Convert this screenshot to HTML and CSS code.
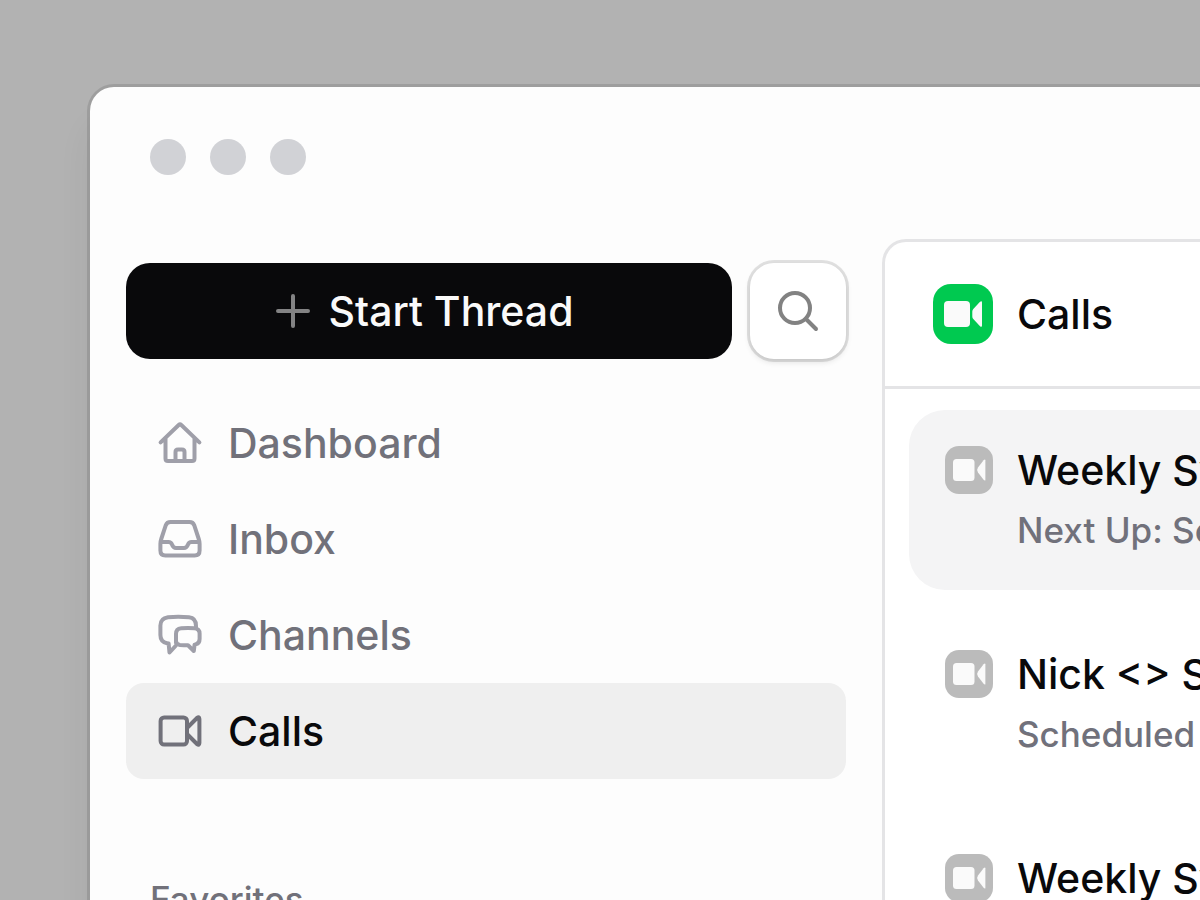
FILE: index.html
```html
<!DOCTYPE html>
<html lang="en">
<head>
<meta charset="utf-8">
<title>Calls</title>
<link rel="stylesheet" href="styles.css">
</head>
<body>
<svg class="defs" aria-hidden="true">
  <symbol id="call-badge" viewBox="0 0 48 48">
    <rect x="8" y="13" width="21.5" height="22" rx="3.5"/>
    <path d="M33 21.500 38.600 14.200Q40.400 12.400 40.400 14.600V33.400Q40.400 35.600 38.600 33.800L33 26.500Q31.200 24 33 21.500Z"/>
  </symbol>
</svg>
<div class="window">
  <header class="titlebar">
    <span class="dot"></span><span class="dot"></span><span class="dot"></span>
  </header>
  <div class="body">
    <aside class="sidebar">
      <div class="actions">
        <button class="start" type="button">
          <svg class="plus" viewBox="0 0 36 36" aria-hidden="true"><path d="M18 3V33M3 18H33"/></svg>
          <span>Start Thread</span>
        </button>
        <button class="search" type="button" aria-label="Search">
          <svg class="icon" viewBox="0 0 48 48" aria-hidden="true"><circle cx="21" cy="21" r="15"/><path d="M32 32 42 42"/></svg>
        </button>
      </div>
      <nav class="nav">
        <a class="item" href="#dashboard">
          <svg class="icon" viewBox="0 0 48 48" aria-hidden="true"><path d="M4.600 23.400 22.700 6Q24 4.800 25.300 6L43.400 23.400M9.500 19.500V39.500Q9.500 42 12 42H36Q38.500 42 38.500 39.500V19.500M19.500 42V33Q19.500 30.500 22 30.500H26Q28.500 30.500 28.500 33V42"/></svg>
          <span>Dashboard</span>
        </a>
        <a class="item" href="#inbox">
          <svg class="icon" viewBox="0 0 48 48" aria-hidden="true"><path d="M14.500 7H33.500Q37 7 38.200 10.200L42.600 23.500Q43.600 26.500 43.600 29V35.500Q43.600 40.500 38.600 40.500H9.400Q4.400 40.500 4.400 35.500V29Q4.400 26.500 5.400 23.500L9.800 10.200Q11 7 14.500 7ZM4.800 27H12.500Q15 27 16 29.500Q17.300 33 20 33H28Q30.700 33 32 29.500Q33 27 35.500 27H43.200"/></svg>
          <span>Inbox</span>
        </a>
        <a class="item" href="#channels">
          <svg class="icon" viewBox="0 0 48 48" aria-hidden="true"><path d="M40 16.500V15C40 9 37 6.700 33 6.300Q22 5.200 12 6.300C7 7 4.400 9.500 4.400 14.500V24C4.400 29 6.500 31.300 11 32.200L12.600 32.500 13.500 41.500 19.500 35M20 32V23Q20 17.600 25.200 17.200Q32 16.600 38.500 17.200Q43.600 17.800 43.600 22.500V28Q43.600 32.600 39.500 33.400L38.600 33.600 37.800 40 32 34.300Q28 34.300 24 34Q20 33.500 20 30"/></svg>
          <span>Channels</span>
        </a>
        <a class="item active" href="#calls" aria-current="page">
          <svg class="icon" viewBox="0 0 48 48" aria-hidden="true"><rect x="4.600" y="10.500" width="26.400" height="27" rx="3.500"/><path d="M31.500 20.500 41 11Q43.400 9.300 43.400 12V36Q43.400 38.700 41 37L31.500 27.500"/></svg>
          <span>Calls</span>
        </a>
      </nav>
      <h2 class="group">Favorites</h2>
    </aside>
    <main class="panel">
      <div class="panel-head">
        <span class="badge big"><svg viewBox="0 0 60 60" aria-hidden="true"><rect x="11" y="17" width="26" height="26" rx="4"/><path d="M40.300 25 46.800 18Q49 16 49 18.600V41.400Q49 44 46.800 42L40.300 35Q39.300 34 39.300 32.500V27.500Q39.300 26 40.300 25Z"/></svg></span>
        <h1 class="title">Calls</h1>
      </div>
      <div class="list">
        <a class="call selected" href="#call-1">
          <span class="badge"><svg aria-hidden="true"><use href="#call-badge"/></svg></span>
          <span class="info"><span class="name">Weekly Sync</span><span class="note">Next Up: Sep</span></span>
        </a>
        <a class="call" href="#call-2">
          <span class="badge"><svg aria-hidden="true"><use href="#call-badge"/></svg></span>
          <span class="info"><span class="name">Nick &lt;&gt; Sam</span><span class="note">Scheduled</span></span>
        </a>
        <a class="call" href="#call-3">
          <span class="badge"><svg aria-hidden="true"><use href="#call-badge"/></svg></span>
          <span class="info"><span class="name">Weekly Sync</span><span class="note">Scheduled</span></span>
        </a>
      </div>
    </main>
  </div>
</div>
</body>
</html>
```
FILE: styles.css
```css
* { box-sizing: border-box; }
body {
  margin: 0;
  height: 100vh;
  overflow: hidden;
  padding: 87px 0 0 90px;
  background: #b2b2b2;
  font: 500 41px/48px Inter, sans-serif;
  color: #09090b;
}
.defs { display: none; }
button, a { font: inherit; color: inherit; text-decoration: none; }
h1, h2 { margin: 0; font-weight: inherit; }
svg { display: block; }

.window {
  display: flex;
  flex-direction: column;
  min-height: 100%;
  background: #fdfdfd;
  border-top-left-radius: 24px;
  box-shadow: 0 0 0 3px rgba(0, 0, 0, 0.11), 0 36px 36px rgba(0, 0, 0, 0.06);
}
.titlebar {
  display: flex;
  align-items: center;
  gap: 24px;
  height: 140px;
  padding: 0 60px;
}
.dot { width: 36px; height: 36px; border-radius: 50%; background: #d1d2d6; }

.body { display: flex; flex: 1; }
.sidebar { flex: 0 0 792px; padding: 36px; }
.actions { display: flex; gap: 18px; margin-bottom: 36px; }
.start {
  flex: 1;
  display: flex;
  align-items: center;
  justify-content: center;
  gap: 18px;
  height: 96px;
  padding: 0 10px 0 0;
  border: 0;
  border-radius: 24px;
  background: #09090b;
  color: #fafafa;
}
.plus { width: 36px; height: 36px; stroke: #838384; stroke-width: 4; stroke-linecap: round; }
.search {
  display: grid;
  place-items: center;
  width: 96px;
  height: 96px;
  border: 0;
  border-radius: 24px;
  background: #fff;
  color: #828282;
  box-shadow: 0 0 0 3px rgba(0, 0, 0, 0.11), 0 3px 6px rgba(0, 0, 0, 0.12);
}
.icon {
  flex: none;
  width: 48px;
  height: 48px;
  fill: none;
  stroke: currentColor;
  stroke-width: 4;
  stroke-linecap: round;
  stroke-linejoin: round;
}
.nav { display: flex; flex-direction: column; }
.item {
  display: flex;
  align-items: center;
  gap: 24px;
  height: 96px;
  padding: 0 30px;
  border-radius: 18px;
  color: #71717a;
}
.item .icon { color: #9f9fa9; }
.active { background: #efefef; color: #09090b; }
.active .icon { color: #71717a; }
.group {
  margin-top: 96px;
  padding-left: 24px;
  font-size: 35px;
  line-height: 48px;
  color: #71717a;
}

.panel {
  flex: 1;
  min-width: 0;
  margin-top: 12px;
  border: 3px solid #e4e4e6;
  border-width: 3px 0 0 3px;
  border-top-left-radius: 24px;
  background: #fff;
}
.panel-head {
  display: flex;
  align-items: center;
  gap: 24px;
  height: 147px;
  padding: 0 48px;
  border-bottom: 3px solid #e4e4e6;
}
.title { font-size: inherit; }
.badge {
  flex: none;
  width: 48px;
  height: 48px;
  border-radius: 14px;
  background: #bbb;
  fill: #fafafa;
}
.badge svg { width: 100%; height: 100%; }
.big { width: 60px; height: 60px; border-radius: 18px; background: #00c950; }
.list { display: flex; flex-direction: column; gap: 24px; padding: 21px 0 0 24px; }
.call {
  display: flex;
  gap: 24px;
  height: 180px;
  padding: 36px 0 36px 36px;
  border-radius: 36px 0 0 36px;
}
.selected { background: #f4f4f5; }
.info { display: flex; flex-direction: column; gap: 12px; white-space: nowrap; }
.note { font-size: 35px; color: #71717b; }
```
